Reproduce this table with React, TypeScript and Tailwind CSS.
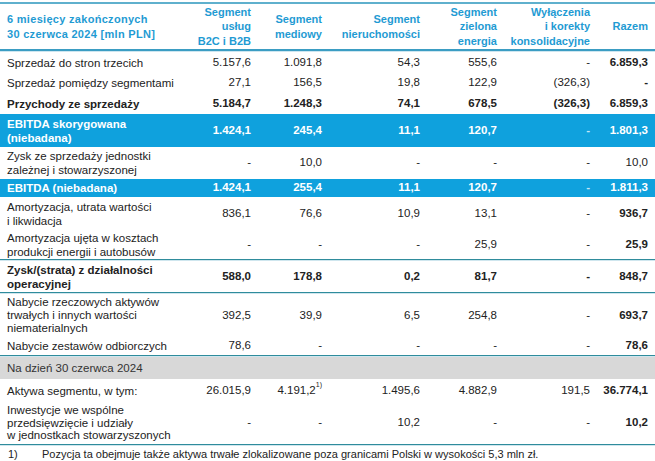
import React from "react";

type Row = {
  label: string[];
  values?: React.ReactNode[];
  kind?: "normal" | "bold" | "band" | "grey";
  boldTotal?: boolean;
  h: string;
  leading?: string;
  lineAfter?: boolean;
};

const grid = "grid grid-cols-[195px_56px_71px_98px_77px_93px_58px] items-center";

const rows: Row[] = [
  {
    label: ["Sprzedaż do stron trzecich"],
    values: ["5.157,6", "1.091,8", "54,3", "555,6", "-", "6.859,3"],
    boldTotal: true,
    h: "h-[21px]",
  },
  {
    label: ["Sprzedaż pomiędzy segmentami"],
    values: ["27,1", "156,5", "19,8", "122,9", "(326,3)", "-"],
    boldTotal: true,
    h: "h-[20px]",
  },
  {
    label: ["Przychody ze sprzedaży"],
    values: ["5.184,7", "1.248,3", "74,1", "678,5", "(326,3)", "6.859,3"],
    kind: "bold",
    h: "h-[21px]",
  },
  {
    label: ["EBITDA skorygowana", "(niebadana)"],
    values: ["1.424,1", "245,4", "11,1", "120,7", "-", "1.801,3"],
    kind: "band",
    h: "h-[33px]",
  },
  {
    label: ["Zysk ze sprzedaży jednostki", "zależnej i stowarzyszonej"],
    values: ["-", "10,0", "-", "-", "-", "10,0"],
    h: "h-[32px]",
  },
  {
    label: ["EBITDA (niebadana)"],
    values: ["1.424,1", "255,4", "11,1", "120,7", "-", "1.811,3"],
    kind: "band",
    h: "h-[18px]",
  },
  {
    label: ["Amortyzacja, utrata wartości", "i likwidacja"],
    values: ["836,1", "76,6", "10,9", "13,1", "-", "936,7"],
    boldTotal: true,
    h: "h-[34px]",
  },
  {
    label: ["Amortyzacja ujęta w kosztach", "produkcji energii i autobusów"],
    values: ["-", "-", "-", "25,9", "-", "25,9"],
    boldTotal: true,
    h: "h-[28px]",
    lineAfter: true,
  },
  {
    label: ["Zysk/(strata) z działalności", "operacyjnej"],
    values: ["588,0", "178,8", "0,2", "81,7", "-", "848,7"],
    kind: "bold",
    h: "h-[31px]",
    lineAfter: true,
  },
  {
    label: ["Nabycie rzeczowych aktywów", "trwałych i innych wartości", "niematerialnych"],
    values: ["392,5", "39,9", "6,5", "254,8", "-", "693,7"],
    boldTotal: true,
    h: "h-[43px]",
    leading: "leading-[13px]",
  },
  {
    label: ["Nabycie zestawów odbiorczych"],
    values: ["78,6", "-", "-", "-", "-", "78,6"],
    boldTotal: true,
    h: "h-[18px]",
    lineAfter: true,
  },
  {
    label: ["Na dzień 30 czerwca 2024"],
    kind: "grey",
    h: "h-[22px]",
  },
  {
    label: ["Aktywa segmentu, w tym:"],
    values: [
      "26.015,9",
      <>
        4.191,2<sup className="text-[7px] align-[3px]">1)</sup>
      </>,
      "1.495,6",
      "4.882,9",
      "191,5",
      "36.774,1",
    ],
    boldTotal: true,
    h: "h-[23px]",
  },
  {
    label: ["Inwestycje we wspólne", "przedsięwzięcie i udziały", "w jednostkach stowarzyszonych"],
    values: ["-", "-", "10,2", "-", "-", "10,2"],
    boldTotal: true,
    h: "h-[42px]",
    leading: "leading-[12.5px]",
    lineAfter: true,
  },
];

const headers = [
  ["Segment", "usług", "B2C i B2B"],
  ["Segment", "mediowy"],
  ["Segment", "nieruchomości"],
  ["Segment", "zielona", "energia"],
  ["Wyłączenia", "i korekty", "konsolidacyjne"],
  ["Razem"],
];

function TealLine() {
  return (
    <div>
      <div className="h-[1px] bg-[#2f8c9c]" />
      <div className="h-[1px] bg-[#cfe6ee]" />
    </div>
  );
}

function TableRow({ row }: { row: Row }) {
  const kind = row.kind ?? "normal";
  const bg =
    kind === "band" ? "bg-[#0fa1dd] text-white font-bold" : kind === "grey" ? "bg-[#d8d8d8] text-[#333]" : "text-[#222]";
  const bold = kind === "bold" ? "font-bold" : "";

  return (
    <>
      <div className={`${grid} ${row.h} ${bg} ${bold} pr-[7px]`}>
        <div className={`pl-[7px] text-[11.5px] ${row.leading ?? "leading-[14px]"} ${kind === "grey" ? "col-span-7" : ""}`}>
          {row.label.map((l) => (
            <div key={l} className="whitespace-nowrap">
              {l}
            </div>
          ))}
        </div>
        {row.values?.map((v, i) => (
          <div
            key={i}
            className={`text-right text-[11.5px] whitespace-nowrap ${
              i === 5 && row.boldTotal ? "font-bold" : ""
            } ${kind === "band" && i === 4 ? "text-white/75" : ""}`}
          >
            {v}
          </div>
        ))}
      </div>
      {row.lineAfter && <TealLine />}
    </>
  );
}

export default function App() {
  return (
    <div className="w-[655px] h-[461px] overflow-hidden bg-white font-['Liberation_Sans',Arial,sans-serif] pt-[2px]">
      <div className="h-[2px] bg-[#5fb0cd]" />
      <div className={`${grid} h-[45px] pr-[7px] text-[11px] font-bold leading-[14.5px] text-[#1f9bd3]`}>
        <div className="pl-[7px] tracking-[0.3px]">
          <div>6 miesięcy zakończonych</div>
          <div>30 czerwca 2024 [mln PLN]</div>
        </div>
        {headers.map((h, i) => (
          <div key={i} className="text-right whitespace-nowrap">
            {h.map((l) => (
              <div key={l}>{l}</div>
            ))}
          </div>
        ))}
      </div>
      <div className="h-[2px] bg-[#3b9dc3]" />
      <div className="h-[1px] bg-[#cde6f0]" />
      {rows.map((r, i) => (
        <TableRow key={i} row={r} />
      ))}
      <div className="flex items-center h-[16px] pl-[8px] text-[11px] text-[#222]">
        <span className="w-[34px]">1)</span>
        <span>Pozycja ta obejmuje także aktywa trwałe zlokalizowane poza granicami Polski w wysokości 5,3 mln zł.</span>
      </div>
    </div>
  );
}
